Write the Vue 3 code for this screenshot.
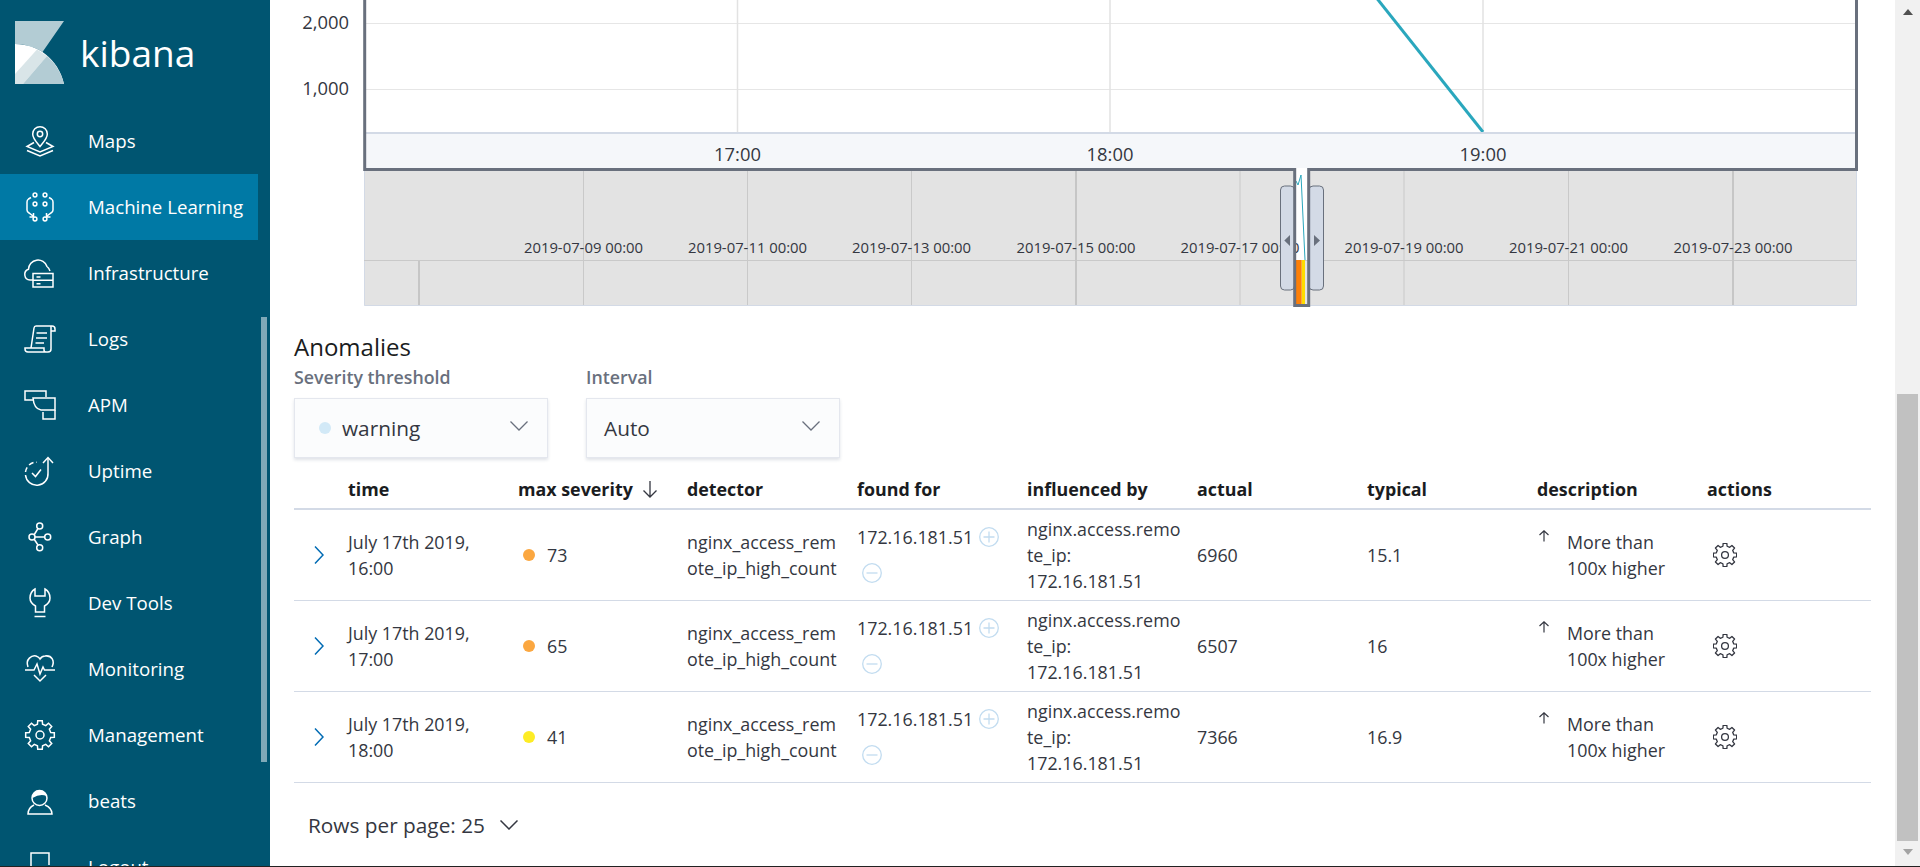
<script setup>
function gear(cx, cy, ro, ri, teeth = 8) {
  const pts = []
  const step = (Math.PI * 2) / teeth
  for (let i = 0; i < teeth; i++) {
    const a = i * step - Math.PI / 2
    const w = step * 0.2
    const g = step * 0.3
    const p = (r, t) => `${(cx + r * Math.cos(t)).toFixed(2)} ${(cy + r * Math.sin(t)).toFixed(2)}`
    pts.push(`${i === 0 ? 'M' : 'L'}${p(ri, a - g)}`)
    pts.push(`L${p(ro, a - w)}`)
    pts.push(`L${p(ro, a + w)}`)
    pts.push(`L${p(ri, a + g)}`)
  }
  return pts.join(' ') + ' Z'
}
const bigGear = gear(16, 16, 14.5, 11)
const smallGear = gear(12, 12, 11.8, 9)

const nav = [
  { label: 'Maps', id: 'maps' },
  { label: 'Machine Learning', id: 'ml', active: true },
  { label: 'Infrastructure', id: 'infra' },
  { label: 'Logs', id: 'logs' },
  { label: 'APM', id: 'apm' },
  { label: 'Uptime', id: 'uptime' },
  { label: 'Graph', id: 'graph' },
  { label: 'Dev Tools', id: 'dev' },
  { label: 'Monitoring', id: 'mon' },
  { label: 'Management', id: 'mgmt' },
  { label: 'beats', id: 'beats' },
  { label: 'Logout', id: 'logout' }
]

const dates = [
  ['2019-07-09 00:00', 583.5], ['2019-07-11 00:00', 747.5], ['2019-07-13 00:00', 911.5],
  ['2019-07-15 00:00', 1076], ['2019-07-17 00:00', 1240], ['2019-07-19 00:00', 1404],
  ['2019-07-21 00:00', 1568.5], ['2019-07-23 00:00', 1733]
]

const cols = ['time', 'max severity', 'detector', 'found for', 'influenced by', 'actual', 'typical', 'description', 'actions']
const rows = [
  { time: 'July 17th 2019, 16:00', sev: 73, color: '#fba740', actual: '6960', typical: '15.1' },
  { time: 'July 17th 2019, 17:00', sev: 65, color: '#fba740', actual: '6507', typical: '16' },
  { time: 'July 17th 2019, 18:00', sev: 41, color: '#fdec25', actual: '7366', typical: '16.9' }
]
</script>

<template>
  <div class="page">
    <aside class="side">
      <div class="brand">
        <svg class="logo" width="49" height="63" viewBox="15 21 49 63">
          <path d="M15 21H64L42.500 52C35 47 25 44 15 44Z" fill="#b3ccd4" />
          <path d="M15 44C37 44 58 58 64 84H15Z" fill="#fff" />
          <path d="M15 74L37 49.500L47 56L23 84H15Z" fill="#d9e5e8" />
          <path d="M47 56C55 63 61 72 64 84H23Z" fill="#b3ccd4" />
        </svg>
        <span class="brand-name">kibana</span>
      </div>
      <div v-for="item in nav" :key="item.id" class="nav-item" :class="{ active: item.active }">
        <svg class="nav-icon" width="32" height="32" viewBox="0 0 32 32">
          <g v-if="item.id === 'maps'">
            <path d="M16 21.500C12 16.500 8.700 13.500 8.700 9A7.300 7.300 0 0 1 23.300 9C23.300 13.500 20 16.500 16 21.500Z" />
            <circle cx="16" cy="9" r="2.700" />
            <path d="M10 17.500L3 21.500L16 27L29 21.500L22 17.500M3 25.500L16 31L29 25.500" />
          </g>
          <g v-else-if="item.id === 'ml'">
            <circle cx="11" cy="4" r="1.900" /><circle cx="21" cy="4" r="1.900" />
            <circle cx="11" cy="13" r="1.900" /><circle cx="21" cy="13" r="1.900" />
            <circle cx="11" cy="28" r="1.900" /><circle cx="21" cy="28" r="1.900" />
            <path d="M7 6.500L4.500 8Q3 9 3 11V19Q3 21 5 22L9 25M5.500 26H9.500V22M25 6.500L27.500 8Q29 9 29 11V19Q29 21 27 22L23 25M26.500 26H22.500V22" />
          </g>
          <g v-else-if="item.id === 'infra'">
            <path d="M9 23H6A5.500 5.500 0 0 1 4.500 12.300A9.500 9.500 0 0 1 23 9.500Q25 11 26 14" />
            <path d="M9 16.500H29V30H9ZM9 23.300H29M12.500 20H16.500M12.500 26.700H16.500" />
          </g>
          <g v-else-if="item.id === 'logs'">
            <path d="M7 25L10 5Q10.300 3 12 3H28Q31 3 31 6V8H27M27 3.500V26Q27 29 24 29H4Q1 29 1 26V25H20V27Q20 29 22 29" />
            <path d="M12.500 10H23M12 15H23M11.500 20H20" />
          </g>
          <g v-else-if="item.id === 'apm'">
            <path d="M9 11H1V2H22V8" />
            <path d="M9 9H31V21H17Q10 20 9 9Z" />
            <path d="M19 23V30H31V21" />
          </g>
          <g v-else-if="item.id === 'uptime'">
            <path d="M24 3V18A11 11 0 0 1 1.500 20" />
            <path d="M19 8L24 2.500L29 8" />
            <path d="M1.500 17A11 11 0 0 1 13 7.200" stroke-dasharray="5 3" />
            <path d="M8 18L11.500 21.500L17 14.500" />
          </g>
          <g v-else-if="item.id === 'graph'">
            <circle cx="15.700" cy="5" r="3" /><circle cx="8" cy="16" r="3" />
            <circle cx="23.700" cy="16" r="3" /><circle cx="15.700" cy="26.700" r="3" />
            <path d="M11 16H20.700M10 14L14 7.500M10 18L14 24" />
          </g>
          <g v-else-if="item.id === 'dev'">
            <path d="M11 2Q6 5 6 11Q6 16 11.500 19V25H20.500V19Q26 16 26 11Q26 5 21 2V9H11Z" />
            <path d="M10.500 29.500H21.500" />
          </g>
          <g v-else-if="item.id === 'mon'">
            <path d="M4 14C1 6 8 2 12 3Q15 4 16 6Q18 3 21 3C28 2 31 8 28 14" />
            <path d="M1 17H10L13 11L16 21L19 14L20.500 17H31" />
            <path d="M10 22L16 28L22 22" />
          </g>
          <g v-else-if="item.id === 'mgmt'">
            <path :d="bigGear" />
            <circle cx="16" cy="16" r="4" />
          </g>
          <g v-else-if="item.id === 'beats'">
            <circle cx="15.500" cy="13" r="7.500" />
            <path d="M8.500 13Q8.500 6 15.500 5.500Q22.500 6 22.500 11Q16 8.500 8.500 13Z" class="solid" />
            <path d="M10 20Q4 23 4 29H28Q28 23 21 20" />
          </g>
          <g v-else-if="item.id === 'logout'">
            <path d="M7 32V2H25V14M15 22L24 31" />
          </g>
        </svg>
        <span class="nav-label">{{ item.label }}</span>
      </div>
      <div class="side-thumb"></div>
    </aside>

    <main class="main">
      <svg class="chart" width="1625" height="307" viewBox="270 0 1625 307">
        <rect x="366" y="0" width="1489" height="132" fill="#fff" />
        <path d="M366 23.500H1855M366 89.500H1855" stroke="#e6e6e6" stroke-width="1.200" fill="none" />
        <path d="M737.500 0V132M1110 0V132M1483 0V132" stroke="#e2e2e2" stroke-width="1.500" fill="none" />
        <path d="M1375 -4L1483 132" stroke="#2aa7bd" stroke-width="3" fill="none" />
        <rect x="366" y="134" width="1489" height="34" fill="#f5f7fa" />
        <rect x="366" y="132" width="1489" height="2" fill="#d3dae6" />
        <text class="axis" x="349" y="29" text-anchor="end">2,000</text>
        <text class="axis" x="349" y="95" text-anchor="end">1,000</text>
        <text class="axis" x="737.500" y="161" text-anchor="middle">17:00</text>
        <text class="axis" x="1110" y="161" text-anchor="middle">18:00</text>
        <text class="axis" x="1483" y="161" text-anchor="middle">19:00</text>

        <rect x="364" y="171" width="1492.500" height="134.500" fill="#e3e3e3" />
        <path d="M364.500 171V305.500H1856.500V171" stroke="#d3dae6" fill="none" />
        <path d="M364 260.500H1856" stroke="#c9c9c9" stroke-width="1" fill="none" />
        <path d="M583.500 171V305M747.500 171V305M911.500 171V305M1240 171V305M1404 171V305M1568.500 171V305" stroke="#c9c9c9" stroke-width="1" fill="none" />
        <path d="M419 261V305M1076 171V305M1733 171V305" stroke="#c6c6c6" stroke-width="2" fill="none" />

        <rect x="1296" y="168" width="12" height="92" fill="#fff" />
        <path d="M1296 181L1298 185L1301 175L1305 260" stroke="#2aa7bd" stroke-width="1" fill="none" />
        <rect x="1296" y="260" width="5" height="44" fill="#fd7f07" />
        <rect x="1301" y="260" width="1" height="44" fill="#fba740" />
        <rect x="1302" y="260" width="3" height="44" fill="#fddc00" />

        <text v-for="d in dates" :key="d[0]" class="date" :x="d[1]" y="252.500" text-anchor="middle">{{ d[0] }}</text>

        <rect x="1280.500" y="186" width="14" height="104" rx="4" fill="#d3dae6" stroke="#69707d" />
        <rect x="1309" y="186" width="14.500" height="104" rx="4" fill="#d3dae6" stroke="#69707d" />
        <path d="M1290 235V246L1284.300 240.500Z" fill="#69707d" />
        <path d="M1314 235V246L1320 240.500Z" fill="#69707d" />
        <path d="M364.700 0V169.500H1294.700V305.500H1308.700V169.500H1856.500V0" stroke="#69707d" stroke-width="3" fill="none" />
      </svg>

      <h2 class="title">Anomalies</h2>
      <div class="filters">
        <div class="field">
          <div class="field-label">Severity threshold</div>
          <div class="select">
            <span class="dot warn"></span>
            <span class="select-text">warning</span>
            <svg class="chev" width="18" height="10" viewBox="0 0 18 10"><path d="M0.500 0.500L9 9L17.500 0.500" /></svg>
          </div>
        </div>
        <div class="field">
          <div class="field-label">Interval</div>
          <div class="select">
            <span class="select-text">Auto</span>
            <svg class="chev" width="18" height="10" viewBox="0 0 18 10"><path d="M0.500 0.500L9 9L17.500 0.500" /></svg>
          </div>
        </div>
      </div>

      <div class="table">
        <div class="head row-grid">
          <div></div>
          <div v-for="c in cols" :key="c" class="th">
            {{ c }}
            <svg v-if="c === 'max severity'" class="sort" width="18" height="18" viewBox="0 0 18 18"><path d="M9 1V17M2.500 10.500L9 17L15.500 10.500" /></svg>
          </div>
        </div>
        <div v-for="r in rows" :key="r.sev" class="row row-grid">
          <div class="expand">
            <svg width="10" height="18" viewBox="0 0 10 18"><path d="M1 0.500L9 9L1 17.500" /></svg>
          </div>
          <div class="td">{{ r.time }}</div>
          <div class="td sev">
            <span class="dot" :style="{ background: r.color }"></span>
            <span>{{ r.sev }}</span>
          </div>
          <div class="td wrap">nginx_access_remote_ip_high_count</div>
          <div class="td found">
            <span>172.16.181.51</span>
            <svg class="pm" width="20" height="20" viewBox="0 0 20 20"><circle cx="10" cy="10" r="9.300" /><path d="M10 4.500V15.500M4.500 10H15.500" /></svg>
            <svg class="pm minus" width="20" height="20" viewBox="0 0 20 20"><circle cx="10" cy="10" r="9.300" /><path d="M4.500 10H15.500" /></svg>
          </div>
          <div class="td wrap">nginx.access.remote_ip: 172.16.181.51</div>
          <div class="td">{{ r.actual }}</div>
          <div class="td">{{ r.typical }}</div>
          <div class="td desc">
            <svg width="12" height="12" viewBox="0 0 12 12"><path d="M6 11.500V1M1.500 5L6 0.800L10.500 5" /></svg>
            <span>More than 100x higher</span>
          </div>
          <div class="td act">
            <svg width="24" height="24" viewBox="0 0 24 24"><path :d="smallGear" /><circle cx="12" cy="12" r="3.400" /></svg>
          </div>
        </div>
      </div>

      <div class="pager">
        <span>Rows per page: 25</span>
        <svg width="18" height="10" viewBox="0 0 18 10"><path d="M0.500 0.500L9 9L17.500 0.500" /></svg>
      </div>
    </main>

    <div class="scroll">
      <div class="scroll-top"><span class="tri up"></span></div>
      <div class="scroll-thumb"></div>
      <div class="scroll-bottom"><span class="tri down"></span></div>
    </div>
  </div>
</template>

<style>
html, body { margin: 0; overflow: hidden; background: #fff; }
</style>

<style scoped>
.page {
  display: flex;
  height: 866px;
  width: 1920px;
  overflow: hidden;
  border-bottom: 1px solid #222;
  font-family: "Open Sans", sans-serif;
  font-size: 17.85px;
  line-height: 26px;
  color: #343741;
  background: #fff;
}
.side {
  position: relative;
  flex: 0 0 270px;
  background: #005571;
  color: #fff;
  overflow: hidden;
  font-size: 18.7px;
}
.brand {
  height: 108px;
  display: flex;
  align-items: flex-start;
  padding: 21px 0 0 15px;
  box-sizing: border-box;
}
.logo { display: block; }
.brand-name {
  margin: 10px 0 0 16px;
  font-family: "Open Sans", sans-serif;
  font-size: 37px;
  line-height: 44px;
  font-weight: 500;
}
.nav-item {
  height: 66px;
  width: 258px;
  display: flex;
  align-items: center;
  padding-left: 24px;
  box-sizing: border-box;
}
.nav-item.active { background: #0079a5; }
.nav-icon { flex: none; overflow: visible; }
.nav-icon path, .nav-icon circle {
  fill: none;
  stroke: #fff;
  stroke-width: 1.5;
}
.nav-icon path.solid { fill: #fff; stroke: none; }
.nav-label { margin-left: 32px; white-space: nowrap; }
.side-thumb {
  position: absolute;
  left: 261px;
  top: 317px;
  width: 6px;
  height: 445px;
  background: #7fa9b8;
}
.main {
  flex: 1;
  min-width: 0;
  padding-left: 24px;
}
.chart {
  display: block;
  margin-left: -24px;
}
.axis { font-size: 18.4px; fill: #343741; }
.date { font-size: 14.85px; fill: #343741; }
.title {
  margin: 25px 0 0;
  font-size: 24px;
  line-height: 30px;
  font-weight: 400;
  color: #1a1c21;
}
.filters {
  display: flex;
  gap: 38px;
  margin-top: 2px;
}
.field { width: 254px; }
.field-label {
  font-size: 17.8px;
  line-height: 26px;
  font-weight: 600;
  color: #69707d;
}
.select {
  margin-top: 8px;
  height: 60px;
  box-sizing: border-box;
  display: flex;
  align-items: center;
  padding: 0 19px 0 17px;
  background: #fbfcfd;
  border: 1px solid #e4e7ee;
  box-shadow: 0 2px 3px rgba(152, 162, 179, 0.3);
}
.select-text { flex: 1; font-size: 20.8px; line-height: 28px; color: #343741; }
.dot { flex: none; width: 12px; height: 12px; border-radius: 50%; }
.dot.warn { background: #d2e9f7; margin: 0 11px 0 7px; }
.chev { flex: none; margin-top: -4px; fill: none; }
.chev path { fill: none; stroke: #69707d; stroke-width: 1.3; }
.table { width: 1577px; margin-top: 13px; }
.row-grid {
  display: grid;
  grid-template-columns: 46px 170px 169px repeat(7, 170px);
  box-sizing: border-box;
}
.head {
  height: 39px;
  align-items: center;
  border-bottom: 2px solid #d3dae6;
  padding-bottom: 1px;
}
.th {
  display: flex;
  align-items: center;
  padding: 0 8px;
  font-weight: 700;
  color: #1a1c21;
  white-space: nowrap;
}
.sort { margin-left: 8px; fill: none; }
.sort path { fill: none; stroke: #343741; stroke-width: 1.3; }
.row {
  height: 91px;
  align-items: center;
  border-bottom: 1px solid #d3dae6;
}
.expand { display: flex; padding-left: 20px; }
.expand path { fill: none; stroke: #006bb4; stroke-width: 1.5; }
.td { padding: 0 8px; }
.wrap { overflow-wrap: anywhere; }
.sev { display: flex; align-items: center; gap: 12px; padding-left: 13px; }
.found {
  display: flex;
  flex-wrap: wrap;
  align-items: center;
  padding-right: 0;
}
.found span { height: 36px; line-height: 36px; }
.pm { margin: 8px 0 8px 6px; fill: none; }
.pm.minus { margin-left: 5px; margin-right: 80px; }
.pm circle, .pm path { fill: none; stroke: #c2dcf0; stroke-width: 1.3; }
.desc { position: relative; padding-left: 38px; }
.desc svg { position: absolute; left: 9px; top: 1px; fill: none; }
.desc path { fill: none; stroke: #343741; stroke-width: 1.2; }
.act { padding-left: 14px; display: flex; }
.act path, .act circle { fill: none; stroke: #343741; stroke-width: 1.3; stroke-linejoin: round; }
.pager {
  display: flex;
  align-items: center;
  gap: 15px;
  height: 84px;
  padding-left: 14px;
  font-size: 20.8px;
  color: #343741;
}
.pager path { fill: none; stroke: #343741; stroke-width: 1.5; }
.scroll {
  flex: 0 0 25px;
  display: flex;
  flex-direction: column;
  background: #f1f1f1;
}
.scroll-top { height: 394px; display: flex; justify-content: center; padding-top: 9px; box-sizing: border-box; }
.scroll-thumb { flex: 1; margin: 0 2px; background: #c1c1c1; }
.scroll-bottom { height: 25px; display: flex; justify-content: center; padding-top: 8px; box-sizing: border-box; }
.tri { width: 0; height: 0; border-left: 5.500px solid transparent; border-right: 5.500px solid transparent; }
.tri.up { border-bottom: 6px solid #505050; }
.tri.down { border-top: 6px solid #a3a3a3; }
</style>
